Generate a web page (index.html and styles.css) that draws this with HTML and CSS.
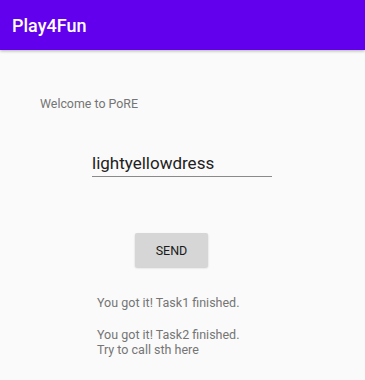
FILE: index.html
```html
<!DOCTYPE html>
<html lang="en">
<head>
  <meta charset="UTF-8" />
  <meta name="viewport" content="width=device-width, initial-scale=1.0" />
  <title>Play4Fun</title>
  <link rel="stylesheet" href="styles.css">
</head>
<body>
  <header class="app-bar">
    <h1>Play4Fun</h1>
  </header>

  <main class="content">
    <p class="welcome">Welcome to PoRE</p>

    <div class="field">
      <input type="text" value="lightyellowdress">
    </div>

    <div class="actions">
      <button class="send">SEND</button>
    </div>

    <div class="results">
      <p>You got it! Task1 finished.</p>
      <p>You got it! Task2 finished.<br>Try to call sth here</p>
    </div>
  </main>
</body>
</html>
```

FILE: styles.css
```css
body {
  margin: 0;
  font-family: Roboto, 'Noto Sans', sans-serif;
  background: #fafafa;
  width: 365px;
  height: 380px;
  overflow: hidden;
}

.app-bar {
  background-color: #6200ee;
  height: 50px;
  display: flex;
  align-items: center;
  padding: 0 12px;
  box-shadow: 0 1px 3px rgba(0,0,0,0.3);
}

.app-bar h1 {
  margin: 0;
  color: white;
  font-size: 18px;
  font-weight: 500;
}

.content {
  padding: 0 40px;
}

.welcome {
  margin: 46px 0 0;
  font-size: 12.4px;
  color: #757575;
  line-height: 16px;
}

.field {
  margin: 41px 0 0 52px;
  width: 180px;
}

.field input {
  width: 100%;
  box-sizing: border-box;
  border: none;
  border-bottom: 1px solid #8a8a8a;
  background: transparent;
  font-family: inherit;
  font-size: 17px;
  color: #212121;
  padding: 0 0 3px 0;
  line-height: 20px;
  outline: none;
}

.actions {
  margin: 56px 0 0 95px;
}

.send {
  width: 73px;
  height: 34px;
  border: none;
  border-radius: 2px;
  background: #d6d6d6;
  font-family: inherit;
  font-size: 12.5px;
  font-weight: 400;
  color: #1a1a1a;
  box-shadow: 0 1px 2px rgba(0,0,0,0.2);
}

.results {
  margin: 28px 0 0 57px;
}

.results p {
  margin: 0 0 17px;
  font-size: 12.5px;
  line-height: 15px;
  color: #757575;
}
```
